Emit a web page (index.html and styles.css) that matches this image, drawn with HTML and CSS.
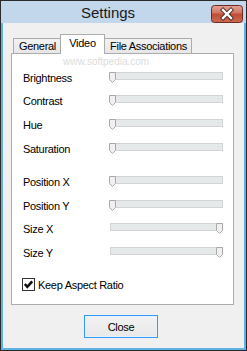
FILE: index.html
```html
<!DOCTYPE html>
<html lang="en">
<head>
    <meta charset="UTF-8">
    <meta name="viewport" content="width=device-width, initial-scale=1.0">
    <title>Settings</title>
    <link rel="stylesheet" href="styles.css">
</head>
<body>
    <div class="window">
        <div class="titlebar">
            <div class="title">Settings</div>
            <div class="close-x">
                <svg width="32" height="18" viewBox="0 0 32 18">
                    <defs>
                        <linearGradient id="red" x1="0" y1="0" x2="0" y2="1">
                            <stop offset="0" stop-color="#e3a396"/>
                            <stop offset="0.45" stop-color="#cf7461"/>
                            <stop offset="0.5" stop-color="#c04b36"/>
                            <stop offset="1" stop-color="#cc6a52"/>
                        </linearGradient>
                    </defs>
                    <rect x="0.5" y="0.5" width="31" height="17" rx="3" fill="url(#red)" stroke="#6e2a20"/>
                    <path d="M12 5 L20 13 M20 5 L12 13" stroke="#4a2a26" stroke-width="4.2" stroke-linecap="square"/>
                    <path d="M12 5 L20 13 M20 5 L12 13" stroke="#fff" stroke-width="2.4" stroke-linecap="square"/>
                </svg>
            </div>
        </div>

        <div class="client">
            <div class="tabs">
                <div class="tab tab-general">General</div>
                <div class="tab tab-video active">Video</div>
                <div class="tab tab-files">File Associations</div>
            </div>

            <div class="panel">
                <div class="group">
                    <div class="row">
                        <div class="label">Brightness</div>
                        <div class="slider"><div class="track"></div><svg class="thumb" width="7" height="11" viewBox="0 0 7 11"><path d="M0.5 0.5 H6.5 V7.5 L3.5 10.5 L0.5 7.5 Z" fill="#f0f0f0" stroke="#a8a8a8"/></svg></div>
                    </div>
                    <div class="row">
                        <div class="label">Contrast</div>
                        <div class="slider"><div class="track"></div><svg class="thumb" width="7" height="11" viewBox="0 0 7 11"><path d="M0.5 0.5 H6.5 V7.5 L3.5 10.5 L0.5 7.5 Z" fill="#f0f0f0" stroke="#a8a8a8"/></svg></div>
                    </div>
                    <div class="row">
                        <div class="label">Hue</div>
                        <div class="slider"><div class="track"></div><svg class="thumb" width="7" height="11" viewBox="0 0 7 11"><path d="M0.5 0.5 H6.5 V7.5 L3.5 10.5 L0.5 7.5 Z" fill="#f0f0f0" stroke="#a8a8a8"/></svg></div>
                    </div>
                    <div class="row">
                        <div class="label">Saturation</div>
                        <div class="slider"><div class="track"></div><svg class="thumb" width="7" height="11" viewBox="0 0 7 11"><path d="M0.5 0.5 H6.5 V7.5 L3.5 10.5 L0.5 7.5 Z" fill="#f0f0f0" stroke="#a8a8a8"/></svg></div>
                    </div>
                </div>

                <div class="group">
                    <div class="row">
                        <div class="label">Position X</div>
                        <div class="slider"><div class="track"></div><svg class="thumb" width="7" height="11" viewBox="0 0 7 11"><path d="M0.5 0.5 H6.5 V7.5 L3.5 10.5 L0.5 7.5 Z" fill="#f0f0f0" stroke="#a8a8a8"/></svg></div>
                    </div>
                    <div class="row">
                        <div class="label">Position Y</div>
                        <div class="slider"><div class="track"></div><svg class="thumb" width="7" height="11" viewBox="0 0 7 11"><path d="M0.5 0.5 H6.5 V7.5 L3.5 10.5 L0.5 7.5 Z" fill="#f0f0f0" stroke="#a8a8a8"/></svg></div>
                    </div>
                    <div class="row">
                        <div class="label">Size X</div>
                        <div class="slider"><div class="track"></div><svg class="thumb thumb-max" width="7" height="11" viewBox="0 0 7 11"><path d="M0.5 0.5 H6.5 V7.5 L3.5 10.5 L0.5 7.5 Z" fill="#f0f0f0" stroke="#a8a8a8"/></svg></div>
                    </div>
                    <div class="row">
                        <div class="label">Size Y</div>
                        <div class="slider"><div class="track"></div><svg class="thumb thumb-max" width="7" height="11" viewBox="0 0 7 11"><path d="M0.5 0.5 H6.5 V7.5 L3.5 10.5 L0.5 7.5 Z" fill="#f0f0f0" stroke="#a8a8a8"/></svg></div>
                    </div>
                </div>

                <div class="check">
                    <div class="box">
                        <svg width="11" height="11" viewBox="0 0 11 11"><path d="M1.8 5 L4.3 7.8 L9.2 2.4" fill="none" stroke="#111" stroke-width="2.6"/></svg>
                    </div>
                    <span>Keep Aspect Ratio</span>
                </div>
            </div>

            <div class="footer">
                <button class="close-btn">Close</button>
            </div>
        </div>

        <div class="mark-url">www.softpedia.com</div>
    </div>
</body>
</html>
```

FILE: styles.css
```css
* {
    margin: 0;
    padding: 0;
    box-sizing: border-box;
}

body {
    width: 247px;
    height: 351px;
    overflow: hidden;
    font-family: "Liberation Sans", Arial, sans-serif;
    font-size: 11px;
    color: #000;
}

.window {
    position: relative;
    width: 247px;
    height: 351px;
    border: 1px solid #2a2a2a;
    background-color: #5fb1e6;
    display: flex;
    flex-direction: column;
}

/* title bar */
.titlebar {
    height: 22px;
    background-color: #c2d6ec;
    display: flex;
    align-items: flex-start;
}

.title {
    flex: 1;
    text-align: center;
    font-size: 15px;
    line-height: 24px;
    color: #1a1a1a;
    padding-left: 4px;
}

.close-x {
    width: 32px;
    height: 18px;
    margin-top: 4px;
    margin-right: 3px;
}

.close-x svg {
    display: block;
}

/* client area */
.client {
    flex: 1;
    margin: 0 2px 2px;
    background-color: #f0f0f0;
    padding-top: 11px;
}

.tabs {
    display: flex;
    align-items: flex-end;
    height: 19px;
    padding-left: 10px;
    position: relative;
    z-index: 1;
}

.tab {
    height: 15px;
    border: 1px solid #acacac;
    border-bottom: none;
    background: linear-gradient(#f2f2f2, #e6e6e6);
    text-align: center;
    line-height: 14px;
    letter-spacing: -0.3px;
}

.tab-general { width: 49px; }

.tab-files {
    width: 89px;
    padding-left: 3px;
}

.tab.active {
    width: 45px;
    height: 20px;
    margin: 0 -2px -1px;
    background: #fff;
    position: relative;
    z-index: 2;
    line-height: 16px;
}

.tab.active + .tab {
    border-left: none;
}

.panel {
    width: 223px;
    height: 252px;
    margin-left: 8px;
    background-color: #fff;
    border: 1px solid #acacac;
    padding: 11.5px 10px 0 11px;
}

.group + .group {
    margin-top: 9.8px;
}

.row {
    height: 23.6px;
    display: grid;
    grid-template-columns: 86px 114px;
    align-items: center;
}

.label {
    letter-spacing: -0.3px;
    padding-top: 1px;
}

.slider {
    position: relative;
    height: 11px;
}

.track {
    height: 8px;
    margin-left: 1px;
    border: 1px solid #d3d3d3;
    background-color: #e6e9e9;
}

.thumb {
    position: absolute;
    top: 0;
    left: 0;
}

.thumb-max {
    left: auto;
    right: 0;
}

.check {
    display: flex;
    align-items: center;
    margin-top: 12.5px;
    margin-left: -1px;
    height: 16px;
}

.check span {
    margin-left: 3px;
    letter-spacing: -0.3px;
}

.box {
    width: 13px;
    height: 13px;
    border: 1px solid #333;
    background-color: #fff;
}

.box svg {
    display: block;
}

.footer {
    padding: 10px 0 0 81px;
}

.close-btn {
    width: 74px;
    height: 23px;
    border: 1px solid #3399ff;
    border-radius: 0;
    background: linear-gradient(#f2f2f2, #e8e8e8);
    box-shadow: inset 0 0 0 1px #e6f1fc;
    font-family: inherit;
    font-size: 11px;
    letter-spacing: -0.3px;
    color: #000;
}

/* watermark */
.mark-url {
    position: absolute;
    top: 55px;
    left: 62px;
    font-size: 10px;
    color: #dcdcdc;
    z-index: 5;
}
```
